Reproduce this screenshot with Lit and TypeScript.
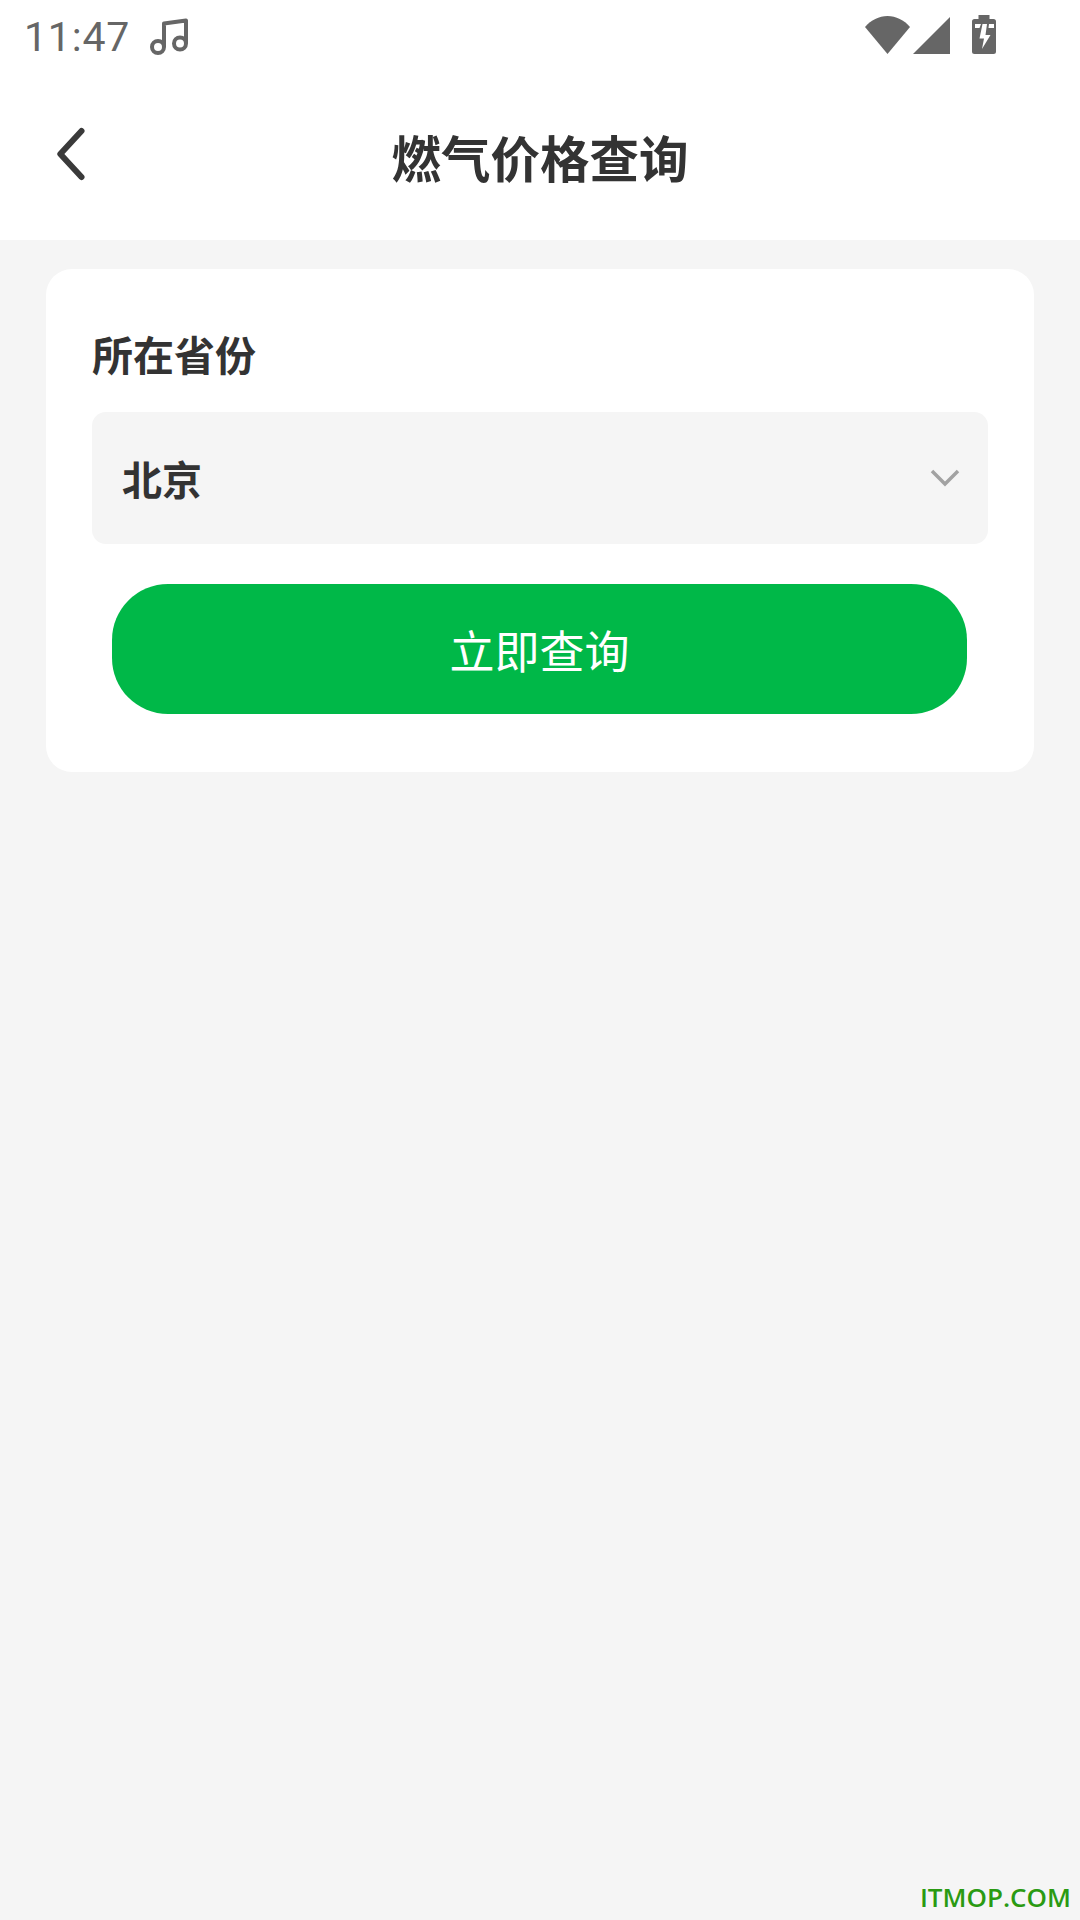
import { LitElement, html, css } from "lit";
import { customElement } from "lit/decorators.js";

@customElement("app-root")
export class AppRoot extends LitElement {
  static styles = css`
    :host {
      display: block;
      position: relative;
      width: 1080px;
      height: 1920px;
      background: #f5f5f5;
      overflow: hidden;
      font-family: "Noto Sans CJK SC", "Noto Sans", sans-serif;
      color: #333;
    }

    .top {
      background: #fff;
      height: 240px;
    }

    .status {
      display: flex;
      align-items: flex-start;
      height: 70px;
      padding-left: 24px;
    }

    .time {
      font-family: Roboto, sans-serif;
      font-size: 41px;
      font-weight: 450;
      line-height: 42px;
      letter-spacing: 0.8px;
      color: #666;
      margin-top: 16px;
      width: 126px;
    }

    .note {
      margin-top: 17px;
    }

    .status-right {
      display: flex;
      align-items: flex-start;
      margin-left: auto;
      padding-right: 84px;
      padding-top: 15px;
    }

    .wifi {
      margin-top: 1px;
      margin-right: 3px;
    }

    .signal {
      margin-top: 2px;
      margin-right: 22px;
    }

    .nav {
      display: grid;
      grid-template-columns: 200px 1fr 200px;
      height: 170px;
    }

    .back {
      padding: 55px 0 0 54px;
    }

    .title {
      margin: 0;
      text-align: center;
      font-size: 49.500px;
      font-weight: 700;
      line-height: 70px;
      padding-top: 52px;
    }

    .content {
      padding: 29px 46px 0;
    }

    .card {
      background: #fff;
      border-radius: 26px;
      height: 503px;
      box-sizing: border-box;
      padding: 55px 46px 0;
    }

    .label {
      font-size: 41px;
      font-weight: 700;
      line-height: 58px;
    }

    .select {
      display: flex;
      align-items: center;
      justify-content: space-between;
      margin-top: 30px;
      height: 132px;
      padding: 0 28px 0 30px;
      background: #f5f5f5;
      border-radius: 14px;
      font-size: 40px;
      font-weight: 700;
    }

    .button {
      display: flex;
      align-items: center;
      justify-content: center;
      height: 130px;
      margin: 40px 21px 0 20px;
      background: #00b848;
      border-radius: 56px;
      color: #fff;
      font-size: 45px;
      font-weight: 400;
    }

    .watermark {
      position: absolute;
      right: 9px;
      bottom: 5px;
      font-family: "Open Sans", sans-serif;
      font-size: 26px;
      font-weight: 600;
      line-height: 36px;
      color: #2a9a12;
    }
  `;

  render() {
    return html`
      <div class="top">
        <div class="status">
          <span class="time">11:47</span>
          <svg class="note" width="42" height="40" viewBox="0 0 42 40" fill="none" stroke="#666" stroke-width="4">
            <circle cx="8" cy="30" r="6" />
            <circle cx="30" cy="26.500" r="6" />
            <path d="M14 30V6.500L36 3.500V26.500" stroke-linejoin="round" />
          </svg>
          <div class="status-right">
            <svg class="wifi" width="45" height="38" viewBox="0 0 45 38" fill="#666">
              <path d="M0 11C6 4 14 0 22.500 0S39 4 45 11L22.500 38Z" />
            </svg>
            <svg class="signal" width="37" height="37" viewBox="0 0 37 37" fill="#666">
              <path d="M37 0V37H0Z" />
            </svg>
            <svg width="24" height="39" viewBox="0 0 24 39">
              <path
                fill="#666"
                d="M6.500 0H17.500V4H21.500A2.500 2.500 0 0 1 24 6.500V36.500A2.500 2.500 0 0 1 21.500 39H2.500A2.500 2.500 0 0 1 0 36.500V6.500A2.500 2.500 0 0 1 2.500 4H6.500Z"
              />
              <path fill="#fff" d="M10.500 9H15L13.500 20H18.500L10 34L12 23.500H7.500Z" />
              <path fill="#fff" d="M3 9H9L7.500 13H3ZM17 9H22V13H16.500Z" />
            </svg>
          </div>
        </div>
        <div class="nav">
          <div class="back">
            <svg width="34" height="58" viewBox="0 0 34 58" fill="none" stroke="#3a3a3a" stroke-width="6" stroke-linecap="round" stroke-linejoin="round">
              <path d="M27.500 6L6.300 29L27.500 52" />
            </svg>
          </div>
          <h1 class="title">燃气价格查询</h1>
        </div>
      </div>
      <div class="content">
        <div class="card">
          <div class="label">所在省份</div>
          <div class="select">
            <span>北京</span>
            <svg width="30" height="18" viewBox="0 0 30 18" fill="none" stroke="#a2a2a2" stroke-width="3.500">
              <path d="M2 2L15 15L28 2" />
            </svg>
          </div>
          <div class="button">立即查询</div>
        </div>
      </div>
      <div class="watermark">ITMOP.COM</div>
    `;
  }
}
